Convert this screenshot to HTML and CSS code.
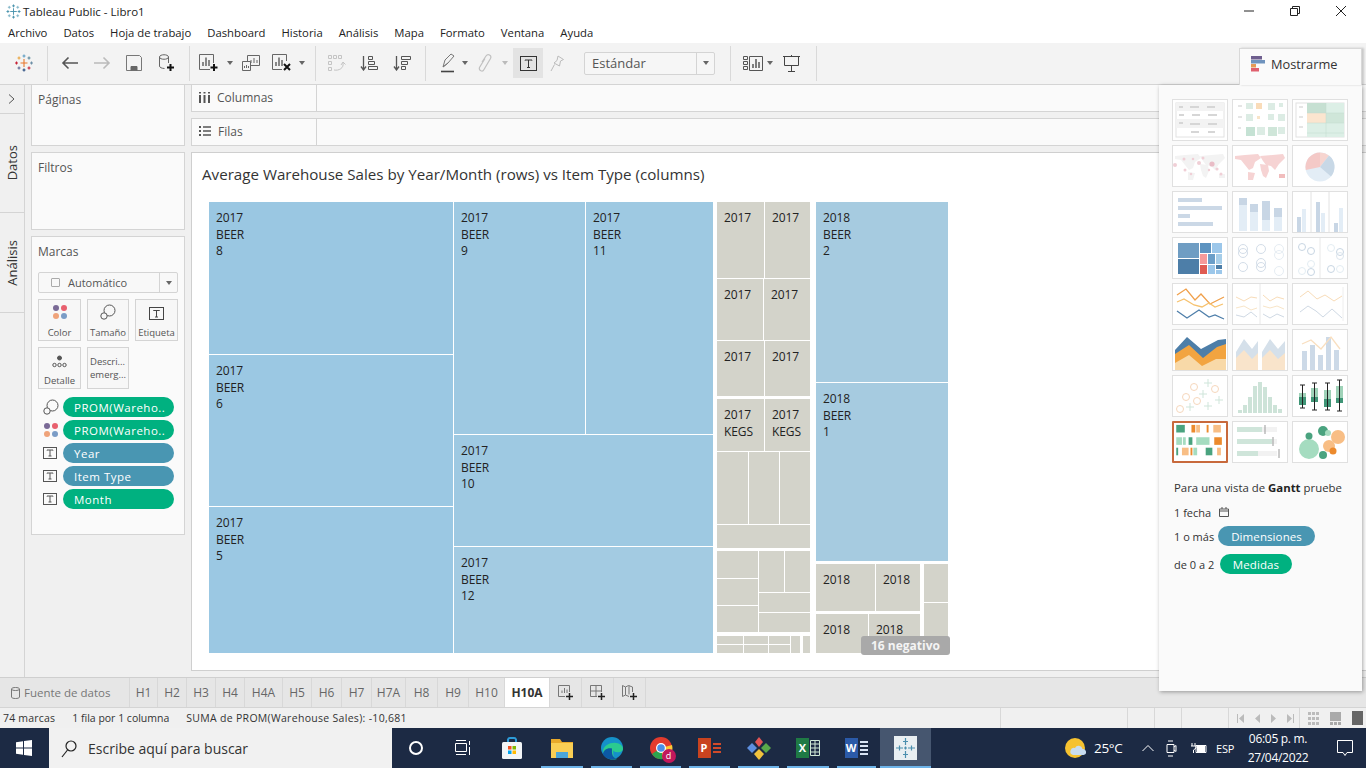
FILE: index.html
```html
<!DOCTYPE html>
<html lang="es">
<head>
<meta charset="utf-8">
<title>Tableau Public - Libro1</title>
<link rel="stylesheet" href="styles.css">
</head>
<body>
<header class="titlebar">
  <svg class="app-ico" viewBox="0 0 16 16"><g stroke="#4a93ad" stroke-width="1" fill="none"><path d="M8 4.500v7M4.500 8h7"/><path d="M8 .5v3M6.500 2h3M8 12.500v3M6.500 14h3M.5 8h3M2 6.500v3M12.500 8h3M14 6.500v3"/><path d="M3.500 2v3M2 3.500h3M12.500 2v3M11 3.500h3M3.500 11v3M2 12.500h3M12.500 11v3M11 12.500h3" stroke="#7fb4c8"/></g></svg>
  <span class="app-title">Tableau Public - Libro1</span>
  <div class="winctl">
    <div class="wbtn"><svg width="12" height="12" viewBox="0 0 12 12"><path d="M1 6h10" stroke="#222"/></svg></div>
    <div class="wbtn"><svg width="12" height="12" viewBox="0 0 12 12"><path d="M1.500 3.500h7v7h-7zM3.500 3.500v-2h7v7h-2" fill="none" stroke="#222"/></svg></div>
    <div class="wbtn"><svg width="12" height="12" viewBox="0 0 12 12"><path d="M1 1l10 10M11 1L1 11" stroke="#222"/></svg></div>
  </div>
</header>
<nav class="menubar">
  <span>Archivo</span><span>Datos</span><span>Hoja de trabajo</span><span>Dashboard</span><span>Historia</span><span>Análisis</span><span>Mapa</span><span>Formato</span><span>Ventana</span><span>Ayuda</span>
</nav>
<div class="toolbar">
  <div class="b w47"><svg width="18" height="18" viewBox="0 0 18 18" fill="none" stroke-width="1.100"><path d="M9 5v8M5.500 9h7" stroke="#e8762b"/><path d="M4 2.500v3M2.500 4h3" stroke="#e8a33d"/><path d="M14 2.500v3M12.500 4h3" stroke="#59879b"/><path d="M9 .5v3M7.500 2h3" stroke="#5b9bc0"/><path d="M4 12.500v3M2.500 14h3" stroke="#5b6591"/><path d="M14 12.500v3M12.500 14h3" stroke="#c72035"/><path d="M9 14.500v3M7.500 16h3" stroke="#1f447a"/><path d="M1.500 7.500v3M0 9h3" stroke="#c72035"/><path d="M16.500 7.500v3M15 9h3" stroke="#6c8ea6"/></svg></div>
  <i class="sep"></i><i class="s6"></i>
  <div class="b w32"><svg width="18" height="14" viewBox="0 0 18 14" fill="none" stroke="#555" stroke-width="1.600"><path d="M17 7H2M7.500 1.500L2 7l5.500 5.500"/></svg></div>
  <div class="b w32"><svg width="18" height="14" viewBox="0 0 18 14" fill="none" stroke="#bbb" stroke-width="1.600"><path d="M1 7h15M10.500 1.500L16 7l-5.500 5.500"/></svg></div>
  <div class="b w32"><svg width="16" height="16" viewBox="0 0 16 16" fill="none" stroke="#777"><path d="M.5.500h13l2 2v13H.5z"/><path d="M5 15.500v-4h6v4" fill="#666" stroke="#666"/></svg></div>
  <div class="b w31"><svg width="18" height="18" viewBox="0 0 18 18" fill="none" stroke="#666"><path d="M2.500 3c0-3 9-3 9 0v6M2.500 3v9c0 1.500 2 2.300 5 2.500M2.500 3c0 3 9 3 9 0"/><path d="M13.500 10v7M10 13.500h7" stroke="#111" stroke-width="2"/></svg></div>
  <i class="s8"></i><i class="sep"></i><i class="s3"></i>
  <div class="b w32"><svg width="20" height="18" viewBox="0 0 20 18" fill="none" stroke="#666"><path d="M11 15.500H.5V.5h14V9"/><path d="M4 12V8M7 12V3.500M10 12V6" stroke-width="1.500"/><path d="M15 10v7M11.500 13.500h7" stroke="#111" stroke-width="2"/></svg></div>
  <div class="caret w10"></div>
  <div class="b w32"><svg width="18" height="16" viewBox="0 0 18 16" fill="none" stroke="#666"><path d="M5.500 6.500V.5h12v10H9"/><path d="M.5 6.500h8v9h-8z" fill="#f3f3f3"/><path d="M9 8V5M12 8V3M15 8V5M2.500 13v-2M4.500 13v-3M6.500 13v-2"/></svg></div>
  <div class="b w30"><svg width="20" height="18" viewBox="0 0 20 18" fill="none" stroke="#666"><path d="M10 15.500H.5V.5h14V7"/><path d="M4 12V8M7 12V3.500M10 12V6" stroke-width="1.500"/><path d="M12 10l6 6M18 10l-6 6" stroke="#111" stroke-width="2"/></svg></div>
  <div class="caret w10"></div>
  <i class="s8"></i><i class="sep"></i><i class="s5"></i>
  <div class="b w32"><svg width="18" height="17" viewBox="0 0 18 17" fill="none" stroke="#c4c4c4"><path d="M.5.500h3v3h-3zM5.500.500h3v3h-3zM10.500.500h3v3h-3zM.5 6.500h3v3h-3zM.5 12.500h3v3h-3z"/><path d="M6 15c5 1 10-2 9-7M13 10l2-3 2.500 2.500" /></svg></div>
  <div class="b w32"><svg width="18" height="16" viewBox="0 0 18 16" fill="none" stroke="#555"><path d="M3.500 1v13M1 11.500L3.500 15 6 11.500" stroke-width="1.300"/><path d="M8.500 1.500h4v3h-4zM8.500 6.500h6v3h-6zM8.500 11.500h9v3h-9z"/></svg></div>
  <i class="s1"></i>
  <div class="b w32"><svg width="18" height="16" viewBox="0 0 18 16" fill="none" stroke="#555"><path d="M3.500 1v13M1 11.500L3.500 15 6 11.500" stroke-width="1.300"/><path d="M8.500 1.500h9v3h-9zM8.500 6.500h6v3h-6zM8.500 11.500h4v3h-4z"/></svg></div>
  <i class="s7"></i><i class="sep"></i><i class="s10"></i>
  <div class="b w24"><svg width="14" height="20" viewBox="0 0 14 20" fill="none" stroke="#777"><path d="M2 14L4 7l6-6 3 2-6 7zM2 14l5-4"/><path d="M0 18.500h13" stroke="#444" stroke-width="1.600"/></svg></div>
  <div class="caret w10"></div>
  <div class="b w30"><svg width="15" height="20" viewBox="0 0 15 20" fill="none" stroke="#c0c0c0" stroke-width="1.200"><path d="M4 9l4-6c2-3 6-.5 4.500 2.500L6 16.500c-1.500 3-5.500 1-4.500-2L7 5.500M5 18l2-3"/></svg></div>
  <div class="caret w10 off"></div>
  <i class="s3"></i>
  <div class="b w30 on"><svg width="17" height="15" viewBox="0 0 17 15" fill="none" stroke="#333"><rect x=".5" y=".5" width="16" height="14"/><path d="M5 4.500V4h7v.5M8.500 4v7.500M7 11.500h3"/></svg></div>
  <div class="b w28"><svg width="14" height="17" viewBox="0 0 14 17" fill="none" stroke="#bbb"><path d="M8 1l5.500 3.500-3 1.500-1 5-5.500-3 3-2.500zM4.500 9.500L1 16"/></svg></div>
  <i class="s13"></i>
  <div class="select"><span>Estándar</span><div class="caret sel-c"></div></div>
  <i class="s15"></i><i class="sep"></i><i class="s10"></i>
  <div class="b w24"><svg width="20" height="15" viewBox="0 0 20 15" fill="none" stroke="#555"><path d="M.5.500h4v3h-4zM.5 5.500h4v3h-4zM.5 10.500h4v3h-4zM6.500.500h13v14h-13z"/><path d="M10 12V8M13 12V3M16 12V6" stroke-width="1.500"/></svg></div>
  <div class="caret w10"></div>
  <div class="b w34"><svg width="18" height="17" viewBox="0 0 18 17" fill="none" stroke="#444"><path d="M0 1.500h17M1.500 1.500v9h14v-9M8.500 10.500v6M5 16.500h7M8.500 0v1"/></svg></div>
  <i class="s7"></i><i class="sep"></i>
</div>

<main class="main">
  <aside class="rail">
    <div class="rail-top"><svg width="7" height="10" viewBox="0 0 7 10" fill="none" stroke="#555"><path d="M1 .5L6 5 1 9.500"/></svg></div>
    <div class="rail-tab tall"><span>Datos</span></div>
    <div class="rail-tab"><span>Análisis</span></div>
  </aside>
  <section class="leftcol">
    <div class="card pages">Páginas</div>
    <div class="card filters">Filtros</div>
    <div class="card marks">
      <div class="marks-title">Marcas</div>
      <div class="marktype">
        <span class="mt-sq"></span><span class="mt-label">Automático</span><div class="caret mt-c"></div>
      </div>
      <div class="markgrid">
        <div class="mbtn"><svg class="mico" width="16" height="16" viewBox="0 0 16 16"><circle cx="4" cy="4" r="3" fill="#7a6a96"/><circle cx="12" cy="4" r="3" fill="#e8606e"/><circle cx="4" cy="12" r="3" fill="#efa37a"/><circle cx="12" cy="12" r="3" fill="#7a9cc6"/></svg><span>Color</span></div>
        <div class="mbtn"><svg class="mico" width="16" height="16" viewBox="0 0 16 16" fill="none" stroke="#555"><circle cx="9.500" cy="6.500" r="5.500"/><circle cx="4" cy="12" r="3.200" fill="#f7f7f7"/></svg><span>Tamaño</span></div>
        <div class="mbtn"><svg class="mico" width="15" height="13" viewBox="0 0 15 13" fill="none" stroke="#444"><rect x=".5" y=".5" width="14" height="12"/><path d="M4.500 4V3.500h6V4M7.500 3.500V10M6 10h3"/></svg><span>Etiqueta</span></div>
        <div class="mbtn"><svg class="mico" width="15" height="13" viewBox="0 0 15 13" fill="none" stroke="#555"><circle cx="7.500" cy="3" r="2" fill="#555"/><circle cx="2.500" cy="10" r="1.700"/><circle cx="7.500" cy="10" r="1.700"/><circle cx="12.500" cy="10" r="1.700"/></svg><span>Detalle</span></div>
        <div class="mbtn txt"><span>Descri...<br>emerg...</span></div>
      </div>
      <div class="pills">
        <div class="prow"><svg width="16" height="16" viewBox="0 0 16 16" fill="none" stroke="#555"><circle cx="9.500" cy="6.500" r="5.500"/><circle cx="4" cy="12" r="3.200" fill="#fafafa"/></svg><div class="pill green">PROM(Wareho..</div></div>
        <div class="prow"><svg width="16" height="16" viewBox="0 0 16 16"><circle cx="4" cy="4" r="3" fill="#7a6a96"/><circle cx="12" cy="4" r="3" fill="#e8606e"/><circle cx="4" cy="12" r="3" fill="#efa37a"/><circle cx="12" cy="12" r="3" fill="#7a9cc6"/></svg><div class="pill green">PROM(Wareho..</div></div>
        <div class="prow"><svg width="14" height="12" viewBox="0 0 14 12" fill="none" stroke="#555"><rect x=".5" y=".5" width="13" height="11"/><path d="M4 3.500V3h6v.5M7 3v6M5.500 9h3"/></svg><div class="pill blue">Year</div></div>
        <div class="prow"><svg width="14" height="12" viewBox="0 0 14 12" fill="none" stroke="#555"><rect x=".5" y=".5" width="13" height="11"/><path d="M4 3.500V3h6v.5M7 3v6M5.500 9h3"/></svg><div class="pill blue">Item Type</div></div>
        <div class="prow"><svg width="14" height="12" viewBox="0 0 14 12" fill="none" stroke="#555"><rect x=".5" y=".5" width="13" height="11"/><path d="M4 3.500V3h6v.5M7 3v6M5.500 9h3"/></svg><div class="pill green">Month</div></div>
      </div>
    </div>
  </section>
  <section class="center">
    <div class="shelf first">
      <div class="shelf-label"><svg width="11" height="11" viewBox="0 0 11 11" fill="#555"><path d="M0 3h2v8H0zM4.500 3h2v8h-2zM9 3h2v8H9zM0 0h2v1.500H0zM4.500 0h2v1.500h-2zM9 0h2v1.500H9z"/></svg>Columnas</div>
    </div>
    <div class="shelf second">
      <div class="shelf-label"><svg width="12" height="10" viewBox="0 0 12 10" fill="#555"><path d="M0 0h2v2H0zM4 .300h8v1.400H4zM0 4h2v2H0zM4 4.300h8v1.400H4zM0 8h2v2H0zM4 8.300h8v1.400H4z"/></svg>Filas</div>
    </div>
    <div class="canvas">
      <h1 class="viz-title">Average Warehouse Sales by Year/Month (rows) vs Item Type (columns)</h1>
      <div class="tm">
        <div class="r" style="width:504px">
          <div class="k" style="width:244px">
            <div class="c bl1" style="height:152px">2017<br>BEER<br>8</div>
            <div class="c bl2" style="height:151px">2017<br>BEER<br>6</div>
            <div class="c bl2" style="height:146px">2017<br>BEER<br>5</div>
          </div>
          <div class="k" style="width:259px">
            <div class="r" style="height:232px">
              <div class="c bl3" style="width:131px">2017<br>BEER<br>9</div>
              <div class="c bl3" style="width:127px">2017<br>BEER<br>11</div>
            </div>
            <div class="c bl3" style="height:111px">2017<br>BEER<br>10</div>
            <div class="c bl4" style="height:106px">2017<br>BEER<br>12</div>
          </div>
        </div>
        <div class="k kegs" style="width:93px">
          <div class="r" style="height:76px"><div class="c g" style="width:47px">2017</div><div class="c g" style="width:45px">2017</div></div>
          <div class="r" style="height:61px"><div class="c g" style="width:46px">2017</div><div class="c g" style="width:46px">2017</div></div>
          <div class="r" style="height:55px"><div class="c g" style="width:47px">2017</div><div class="c g" style="width:45px">2017</div></div>
          <div class="r gap2" style="height:52px"><div class="c g" style="width:47px">2017<br>KEGS</div><div class="c g" style="width:45px">2017<br>KEGS</div></div>
          <div class="r" style="height:72px"><div class="c g" style="width:31px"></div><div class="c g" style="width:30px"></div><div class="c g" style="width:30px"></div></div>
          <div class="c g" style="height:23px"></div>
          <div class="r gap2" style="height:81px">
            <div class="k" style="width:41px"><div class="c g" style="height:27px"></div><div class="c g" style="height:26px"></div><div class="c g" style="height:26px"></div></div>
            <div class="k" style="width:51px">
              <div class="r" style="height:41px"><div class="c g" style="width:25px"></div><div class="c g" style="width:25px"></div></div>
              <div class="c g" style="height:19px"></div><div class="c g" style="height:19px"></div>
            </div>
          </div>
          <div class="r gap3" style="height:17px">
            <div class="k" style="width:26px"><div class="c g" style="height:8px"></div><div class="c g" style="height:8px"></div></div>
            <div class="k" style="width:24px"><div class="c g" style="height:8px"></div><div class="c g" style="height:8px"></div></div>
            <div class="k" style="width:21px"><div class="c g" style="height:8px"></div><div class="c g" style="height:8px"></div></div>
            <div class="c g" style="width:9px"></div>
            <div class="c g gapl" style="width:7px"></div>
          </div>
        </div>
        <div class="k y18" style="width:132px">
          <div class="c bl5" style="height:180px">2018<br>BEER<br>2</div>
          <div class="c bl5" style="height:178px">2018<br>BEER<br>1</div>
          <div class="r gap2" style="height:89px">
            <div class="k" style="width:104px">
              <div class="r" style="height:47px"><div class="c g" style="width:59px">2018</div><div class="c g" style="width:44px">2018</div></div>
              <div class="r gap2" style="height:39px"><div class="c g" style="width:52px">2018</div><div class="c g" style="width:51px">2018</div></div>
            </div>
            <div class="k gapl2" style="width:24px"><div class="c g" style="height:38px"></div><div class="c g" style="height:50px"></div></div>
          </div>
        </div>
      </div>
      <div class="negbadge">16 negativo</div>
    </div>
  </section>
</main>

<aside class="showme">
  <div class="sm-tab"><svg width="15" height="16" viewBox="0 0 15 16"><rect width="11" height="3.500" fill="#6f5f8f"/><rect y="4" width="14" height="3.500" fill="#6f93bd"/><rect y="8" width="5" height="3.500" fill="#e69a55"/><rect y="12" width="8" height="3.500" fill="#e0606e"/></svg><span>Mostrarme</span></div>
  <div class="sm-body">
    <div class="sm-grid">
      <div class="th"><svg viewBox="0 0 54 40"><rect x="3" y="3" width="48" height="34" fill="#fff" stroke="#e2e2e2"/><path d="M3 3h48v8H3zM3 19h48v9H3z" fill="#f3f3f3"/><path d="M6 7h4M6 15h5M6 23h4M17 7h9M34 7h8M19 15h8M35 15h9M17 24h10M35 24h9M18 32h8M35 32h7" stroke="#d6d6d6" stroke-width="2"/></svg></div>
      <div class="th"><svg viewBox="0 0 54 40"><g fill="#dcece4"><rect x="13" y="3" width="7" height="6"/><rect x="35" y="3" width="7" height="7"/><rect x="46" y="3" width="4" height="4"/><rect x="13" y="14" width="7" height="7"/><rect x="35" y="14" width="6" height="6"/><rect x="45" y="14" width="7" height="7"/><rect x="24" y="16" width="3" height="3" fill="#f8e4c8"/><rect x="13" y="27" width="9" height="9" fill="#c5e2d4"/><rect x="24" y="27" width="8" height="8"/><rect x="35" y="27" width="9" height="9" fill="#cfe6d9"/><rect x="45" y="27" width="7" height="7"/></g><rect x="23" y="3" width="6" height="6" fill="#f9dcb9"/><path d="M5 6h4M5 17h4M5 28h3" stroke="#ddd" stroke-width="1.500"/></svg></div>
      <div class="th"><svg viewBox="0 0 54 40"><rect x="3" y="3" width="48" height="34" fill="#fff" stroke="#e2e2e2"/><g fill="#dcefe6"><rect x="14" y="3" width="19" height="10" fill="#c6e0d2"/><rect x="33" y="3" width="18" height="10"/><rect x="14" y="13" width="19" height="10" fill="#fbe5cf"/><rect x="33" y="13" width="18" height="10" fill="#cfe6d9"/><rect x="14" y="23" width="19" height="10"/><rect x="33" y="23" width="18" height="10"/><rect x="14" y="33" width="37" height="4"/></g><path d="M14 13h37M14 23h37M14 33h37M33 3v34" stroke="#c3d8cc" stroke-width=".5"/><path d="M6 7h4M6 17h4M6 27h4" stroke="#ddd" stroke-width="1.500"/></svg></div>
      <div class="th"><svg viewBox="0 0 54 40"><g fill="#f3f3f3"><path d="M2 10l10-1 13-1 3 4-6 4-2 6-4 2-4-5-4-5-6-1z"/><path d="M15 26l7 1-2 7-5 0z"/><path d="M27 10l23-2 2 4-6 6-4 6-4-4-5-1-3-4z"/><path d="M27 18l8 1 1 6-3 7-3-2-2-6z"/><path d="M46 28h6v4h-6z"/></g><g fill="#f0cfd6"><circle cx="2" cy="19" r="2"/><circle cx="11" cy="13" r="1.500"/><circle cx="20" cy="13" r="1.300"/><circle cx="26" cy="17" r="2"/><circle cx="39" cy="18" r="2.600" fill="#e9bcc6"/><circle cx="44" cy="23" r="1.600"/><circle cx="12" cy="24" r="1.500"/><circle cx="18" cy="28" r="1.300"/><circle cx="48" cy="28" r="1.500"/><circle cx="30" cy="12" r="1.500"/><circle cx="36" cy="24" r="1.200"/></g></svg></div>
      <div class="th"><svg viewBox="0 0 54 40"><g fill="#f6d3d3"><path d="M2 10l10-1 13-1 3 4-6 4-2 6-4 2-4-5-4-5-6-1z"/><path d="M15 26l7 1-2 7-5 0z"/><path d="M27 10l23-2 2 4-6 6-4 6-4-4-5-1-3-4z"/><path d="M27 18l8 1 1 6-3 7-3-2-2-6z"/></g><path d="M46 28h6v4h-6z" fill="#f1bdbd"/></svg></div>
      <div class="th"><svg viewBox="0 0 54 40"><circle cx="27" cy="21" r="14.500" fill="#e3edf6"/><path d="M27 21V6.500A14.500 14.500 0 0 1 36 9.600z" fill="#f7d5d0"/><path d="M27 21l9-11.400A14.500 14.500 0 0 1 38 30.400z" fill="#c8d8e6"/><path d="M27 21V6.500A14.500 14.500 0 0 0 12.800 24z" fill="#f4c9c7"/></svg></div>
      <div class="th"><svg viewBox="0 0 54 40" fill="#cbd8e6"><rect x="5" y="6" width="24" height="4"/><rect x="5" y="14" width="44" height="4"/><rect x="5" y="22" width="12" height="4"/><rect x="5" y="30" width="35" height="4"/></svg></div>
      <div class="th"><svg viewBox="0 0 54 40"><g fill="#e3edf6"><rect x="6" y="6" width="8" height="33"/><rect x="17" y="12" width="8" height="27"/><rect x="29" y="9" width="8" height="30"/><rect x="41" y="16" width="8" height="23"/></g><g fill="#c8d6e5"><rect x="6" y="6" width="8" height="7"/><rect x="17" y="12" width="8" height="8"/><rect x="29" y="9" width="8" height="19"/><rect x="41" y="16" width="8" height="9"/></g></svg></div>
      <div class="th"><svg viewBox="0 0 54 40"><path d="M18 0v40M36 0v40" stroke="#e2e2e2"/><g fill="#c8d6e5"><rect x="4" y="25" width="4" height="15"/><rect x="23" y="10" width="4" height="30"/><rect x="41" y="31" width="4" height="9"/></g><g fill="#e3edf6"><rect x="9" y="17" width="4" height="23"/><rect x="28" y="21" width="4" height="19"/><rect x="46" y="16" width="4" height="24"/></g></svg></div>
      <div class="th"><svg viewBox="0 0 54 40"><rect x="5" y="5" width="21" height="15" fill="#6f9dc3"/><rect x="5" y="21" width="21" height="15" fill="#4d7ea8"/><rect x="27" y="5" width="11" height="10" fill="#5d93c0"/><rect x="39" y="5" width="10" height="10" fill="#9cc7ea"/><rect x="27" y="16" width="7" height="10" fill="#f59a9a"/><rect x="35" y="16" width="7" height="10" fill="#6b9ec8"/><rect x="43" y="16" width="6" height="10" fill="#a6cde8"/><rect x="27" y="27" width="7" height="9" fill="#df5b52"/><rect x="35" y="27" width="7" height="9" fill="#9cc7ea"/><rect x="43" y="27" width="6" height="4" fill="#4d7ea8"/><rect x="43" y="32" width="6" height="4" fill="#9cc7ea"/></svg></div>
      <div class="th"><svg viewBox="0 0 54 40" fill="none" stroke="#d3dde8"><circle cx="10" cy="11" r="4.500"/><circle cx="10" cy="15" r="4.500"/><circle cx="10" cy="29" r="4.500"/><circle cx="28" cy="11" r="4.500"/><circle cx="28" cy="25" r="4.500"/><circle cx="28" cy="29" r="4.500"/><circle cx="46" cy="11" r="4.500" stroke="#e6edf3"/><circle cx="46" cy="17" r="4.500" stroke="#e6edf3"/><circle cx="46" cy="33" r="4.500" stroke="#e6edf3"/></svg></div>
      <div class="th"><svg viewBox="0 0 54 40" fill="none" stroke="#c8d6e3"><path d="M27 0v40" stroke="#e8e8e8"/><circle cx="9" cy="9" r="3.500"/><circle cx="18" cy="13" r="3.500"/><circle cx="18" cy="34" r="3.500"/><circle cx="9" cy="33" r="3.500" stroke="#e3edf3"/><circle cx="18" cy="26" r="3.500" stroke="#e3edf3"/><circle cx="38" cy="10" r="3.500" stroke="#e3edf3"/><circle cx="47" cy="14" r="3.500"/><circle cx="47" cy="18" r="3.500" stroke="#dde6ee"/><circle cx="38" cy="31" r="3.500"/><circle cx="47" cy="31" r="3.500" stroke="#e3edf3"/></svg></div>
      <div class="th"><svg viewBox="0 0 54 40" fill="none" stroke-width="1.300"><path d="M4 11l9-6 9 11 6-6 9 10 14-7" stroke="#f0a04b"/><path d="M4 18l7-3 10 6 8 2 7-4 6 4 8-3" stroke="#f6c26f"/><path d="M4 27l10 7 12-8 10 7 6-2 9 4" stroke="#4f7faa"/></svg></div>
      <div class="th"><svg viewBox="0 0 54 40" fill="none"><path d="M27 0v40" stroke="#e8e8e8"/><path d="M3 13l8 4 7-4 6 1M30 11l7 6 7-4 7 2" stroke="#f8dcb8"/><path d="M3 24l8-2 7 4 6-2M30 22l7 2 7-2 7 3" stroke="#f8e5c8"/><path d="M3 31l8 2 7-5 6 5M30 30l7 4 7-4 7 3" stroke="#cfd9e4"/></svg></div>
      <div class="th"><svg viewBox="0 0 54 40" fill="none"><path d="M50 3v34" stroke="#eee"/><path d="M7 13l8-6 9 8 8-4 9 6 8-5" stroke="#f8dcb8"/><path d="M7 28l8-6 8 5 7 6 9-8 10 9" stroke="#cfd9e4"/></svg></div>
      <div class="th"><svg viewBox="0 0 54 40"><path d="M2 20L14 7l14 12 17-9 8-1v31H2z" fill="#4d7ea8"/><path d="M2 24l14-9 14 13 14-11 9-3v26H2z" fill="#f2a440"/><path d="M2 33l14-8 13 11 14-7 10 0v11H2z" fill="#f8d9a8"/></svg></div>
      <div class="th"><svg viewBox="0 0 54 40"><path d="M3 22L11 9l8 10 6-8v29H3z" fill="#d5e0ea"/><path d="M3 28l8-8 8 9 6-6v17H3z" fill="#f9e4cb"/><path d="M29 22l8-13 8 10 7-8v29H29z" fill="#d5e0ea"/><path d="M29 28l8-8 8 9 7-6v17H29z" fill="#f9e4cb"/></svg></div>
      <div class="th"><svg viewBox="0 0 54 40"><g fill="#ccd9e7"><rect x="9" y="21" width="5" height="19"/><rect x="17" y="15" width="5" height="25"/><rect x="25" y="25" width="5" height="15"/><rect x="33" y="7" width="5" height="33"/><rect x="41" y="20" width="5" height="20"/></g><path d="M9 14l9-4 10 9 10-12 9 12" stroke="#f9dfc0" fill="none" stroke-width="1.300"/></svg></div>
      <div class="th"><svg viewBox="0 0 54 40" fill="none" stroke="#f6d7bc"><circle cx="21" cy="11" r="3.500"/><circle cx="42" cy="13" r="3.500"/><circle cx="13" cy="21" r="3.500"/><circle cx="24" cy="25" r="3.500"/><circle cx="7" cy="33" r="3.500"/><path d="M35 3v8M31 7h8M30 14v8M26 18h8M46 20v8M42 24h8M17 27v8M13 31h8M35 26v8M31 30h8" stroke="#cfe5da"/></svg></div>
      <div class="th"><svg viewBox="0 0 54 40" fill="#cde3d8"><rect x="5" y="34" width="4" height="3"/><rect x="10" y="29" width="4" height="8"/><rect x="15" y="21" width="4" height="16"/><rect x="20" y="10" width="4" height="27"/><rect x="25" y="6" width="4" height="31"/><rect x="30" y="11" width="4" height="26"/><rect x="35" y="21" width="4" height="16"/><rect x="40" y="29" width="4" height="8"/><rect x="45" y="33" width="4" height="4"/></svg></div>
      <div class="th"><svg viewBox="0 0 54 40"><g fill="#9fd2b8"><rect x="6" y="17" width="7" height="12"/><rect x="18" y="12" width="7" height="14"/><rect x="31" y="14" width="7" height="12"/><rect x="43" y="10" width="7" height="12"/></g><g fill="#3f9576"><rect x="6" y="21" width="7" height="8"/><rect x="18" y="21" width="7" height="5"/><rect x="31" y="23" width="7" height="8"/><rect x="43" y="22" width="7" height="5"/></g><path d="M9.500 9v23M7 9h5M7 32h5M21.500 7v27M19 7h5M19 34h5M34.500 7v27M32 7h5M32 34h5M46.500 4v31M44 4h5M44 35h5" stroke="#222" fill="none"/></svg></div>
      <div class="th active"><svg viewBox="0 0 54 40"><g fill="#4aa37f"><rect x="2" y="2" width="9" height="8"/><rect x="15" y="15" width="4" height="8"/><rect x="33" y="26" width="7" height="8"/><rect x="2" y="26" width="2" height="8"/></g><g fill="#a5dcc0"><rect x="2" y="15" width="6" height="8"/><rect x="9" y="15" width="3" height="8"/><rect x="23" y="15" width="14" height="8"/><rect x="20" y="26" width="4" height="8"/></g><g fill="#ec8a2d"><rect x="18" y="2" width="4" height="8"/><rect x="34" y="2" width="2" height="8"/><rect x="42" y="15" width="8" height="8"/><rect x="17" y="26" width="2" height="8"/></g><g fill="#f8be85"><rect x="23" y="2" width="4" height="8"/><rect x="41" y="2" width="8" height="8"/><rect x="8" y="26" width="7" height="8"/><rect x="45" y="26" width="4" height="8"/></g></svg></div>
      <div class="th"><svg viewBox="0 0 54 40"><rect x="4" y="5" width="40" height="5" fill="#f2f2f2"/><rect x="4" y="17" width="40" height="5" fill="#f2f2f2"/><rect x="4" y="29" width="40" height="5" fill="#f2f2f2"/><rect x="4" y="5" width="25" height="5" fill="#cfe5da"/><rect x="4" y="17" width="35" height="5" fill="#cfe5da"/><rect x="4" y="29" width="21" height="5" fill="#cfe5da"/><path d="M32 3v9M40 15v9M46 27v9" stroke="#999"/></svg></div>
      <div class="th"><svg viewBox="0 0 54 40"><circle cx="16" cy="27" r="10" fill="#a5dcc0"/><circle cx="30" cy="9" r="5" fill="#4aa37f"/><circle cx="16" cy="14" r="3.500" fill="#4aa37f"/><circle cx="36" cy="24" r="6" fill="#f8be85"/><circle cx="45" cy="15" r="7" fill="#f8be85"/><circle cx="35" cy="11" r="3" fill="#a5dcc0"/><circle cx="30" cy="33" r="4" fill="#4aa37f"/><circle cx="40" cy="29" r="3.500" fill="#ec8a2d"/></svg></div>
    </div>
    <div class="hint">
      <p class="h-first">Para una vista de <b>Gantt</b> pruebe</p>
      <p class="h-date">1 fecha <svg width="10" height="10" viewBox="0 0 10 10" fill="none" stroke="#555"><path d="M.5 2h9v7.500h-9zM.5 4h9M3 0v2M7 0v2"/></svg></p>
      <p class="h-dim">1 o más <span class="pill blue sm dim">Dimensiones</span></p>
      <p class="h-med">de 0 a 2 <span class="pill green sm med">Medidas</span></p>
    </div>
  </div>
</aside>

<div class="tabs">
  <div class="tab ds"><svg width="9" height="12" viewBox="0 0 9 12" fill="none" stroke="#777"><path d="M.5 2c0-2 8-2 8 0v8c0 2-8 2-8 0zM.5 2c0 2 8 2 8 0"/></svg>Fuente de datos</div>
  <div class="tab t28">H1</div><div class="tab t29">H2</div><div class="tab t29">H3</div><div class="tab t29">H4</div><div class="tab t39">H4A</div><div class="tab t29">H5</div><div class="tab t30">H6</div><div class="tab t30">H7</div><div class="tab t34">H7A</div><div class="tab t32">H8</div><div class="tab t31">H9</div><div class="tab t36">H10</div>
  <div class="tab active-tab">H10A</div>
  <div class="tab t32"><svg width="17" height="17" viewBox="0 0 17 17" fill="none" stroke="#777"><path d="M8 12.500H1.500V1.500h11V8M5 9V6.500M7.500 9V4M10 9V5.500"/><path d="M12.500 9v7M9 12.500h7" stroke="#222" stroke-width="1.500"/></svg></div>
  <div class="tab t32"><svg width="17" height="17" viewBox="0 0 17 17" fill="none" stroke="#777"><path d="M8 12.500H1.500V1.500h11V8M1.500 7h11M7 1.500v11"/><path d="M12.500 9v7M9 12.500h7" stroke="#222" stroke-width="1.500"/></svg></div>
  <div class="tab t32"><svg width="17" height="17" viewBox="0 0 17 17" fill="none" stroke="#777"><path d="M8 12.500L4.500 11 1.500 12.500v-11l3 1.500 3-1.500 4 1.500v5M4.500 3v8M8 1.500v9"/><path d="M12.500 9v7M9 12.500h7" stroke="#222" stroke-width="1.500"/></svg></div>
</div>
<footer class="status">
  <span class="st74">74 marcas</span><span class="st1">1 fila por 1 columna</span><span class="st2">SUMA de PROM(Warehouse Sales): -10,681</span>
  <div class="st-cells">
    <i class="c127"></i><i class="c27"></i><i class="c27"></i><i class="c47"></i>
    <div class="nav"><svg width="62" height="9" viewBox="0 0 62 9" fill="#bbb"><path d="M0 0h1v9H0zM7 0v9L2 4.500zM23 0v9l-5-4.500zM34 0v9l5-4.500zM50 0v9l5-4.500zM56 0h1v9h-1z"/></svg></div>
    <div class="views">
      <svg width="11" height="13" viewBox="0 0 11 13" fill="#bbb"><path d="M0 0h3v3H0zM4 0h3v3H4zM8 0h3v3H8zM0 5h3v3H0zM4 5h3v3H4zM8 5h3v3H8zM0 10h3v3H0zM4 10h3v3H4zM8 10h3v3H8z"/></svg>
      <svg width="11" height="13" viewBox="0 0 11 13" fill="#aaa"><path d="M0 0h11v9H0zM0 10h3v3H0zM4 10h3v3H4zM8 10h3v3H8z"/></svg>
      <svg width="11" height="14" viewBox="0 0 11 14" fill="#666"><path d="M0 0h11v14H0z"/></svg>
    </div>
  </div>
</footer>
<div class="taskbar">
  <div class="tk-start"><svg width="16" height="16" viewBox="0 0 16 16" fill="#fff"><path d="M0 2.200l7-1v6.300H0zM8 1l8-1v7.500H8zM0 8.500h7v6.300l-7-1zM8 8.500h8V16l-8-1z"/></svg></div>
  <div class="tk-search"><svg width="16" height="18" viewBox="0 0 16 18" fill="none" stroke="#222" stroke-width="1.200"><circle cx="10" cy="6" r="5"/><path d="M6.500 10L1 17"/></svg><span>Escribe aquí para buscar</span></div>
  <div class="tk-apps">
    <div class="tk-a w48"><svg width="16" height="16" viewBox="0 0 16 16" fill="none" stroke="#fff" stroke-width="2"><circle cx="8" cy="8" r="6"/></svg></div>
    <div class="tk-a w47"><svg width="17" height="16" viewBox="0 0 17 16" fill="none" stroke="#fff"><path d="M.5 3.500h11v8H.5zM1 .5h10M1 14.500h10M14.500 1v4M14.500 7v8"/></svg></div>
    <div class="tk-a w50"><svg width="22" height="24" viewBox="0 0 22 24"><path d="M7 6V3.500A2 2 0 0 1 9 2h4a2 2 0 0 1 2 1.500V6" fill="none" stroke="#2d9bd8" stroke-width="2"/><rect x="1" y="6" width="20" height="17" rx="1.500" fill="#f2f5f7"/><rect x="7" y="10" width="3.500" height="3.500" fill="#f25022"/><rect x="11.500" y="10" width="3.500" height="3.500" fill="#7fba00"/><rect x="7" y="14.500" width="3.500" height="3.500" fill="#00a4ef"/><rect x="11.500" y="14.500" width="3.500" height="3.500" fill="#ffb900"/></svg></div>
    <div class="tk-a w50 open"><svg width="24" height="22" viewBox="0 0 24 22"><path d="M1 2h9l2 3h11v3H1z" fill="#e8a92a"/><path d="M1 6h22v15H1z" fill="#f9ce54"/><path d="M6 15h12v6H6z" fill="#4ba6d9"/></svg></div>
    <div class="tk-a w49 open"><svg width="24" height="24" viewBox="0 0 24 24"><circle cx="12" cy="12" r="11" fill="#1591c9"/><path d="M3 15C4 7 17 4 22 10c2 3 1 5-2 6-5 1-7-1-8-3 3 3-1 8 5 10-7 2-13-1-14-8z" fill="#2bcb8f"/><path d="M12 12.500c-5-1-9 2-9 6 2 4 8 6 14 4.500-6-2-5-7-5-10.500z" fill="#0c59a4"/></svg></div>
    <div class="tk-a w49 open"><div class="chrome"><svg width="24" height="24" viewBox="0 0 24 24"><circle cx="12" cy="12" r="11" fill="#e33b2e"/><path d="M12 12L3 18a11 11 0 0 0 11 5z" fill="#2da44e"/><path d="M12 12l11-3a11 11 0 0 1-9 14z" fill="#fcc934"/><circle cx="12" cy="12" r="5" fill="#fff"/><circle cx="12" cy="12" r="3.800" fill="#4a8fe8"/></svg><span class="ch-d">d</span></div></div>
    <div class="tk-a w49 open"><div class="off-ico ppt"><span class="off-l">P</span><svg width="10" height="18" viewBox="0 0 10 18" fill="none" stroke="#d04a2a" stroke-width="2"><path d="M1 5h8M1 9h8M1 13h8"/></svg></div></div>
    <div class="tk-a w49 open"><svg width="26" height="28" viewBox="0 0 26 28"><path d="M13 3l4 5-4 5-4-5z" fill="#e25555"/><path d="M6 9l5 5-5 5-5-5z" fill="#5d8fe0"/><path d="M20 9l5 5-5 5-5-5z" fill="#59a84a"/><path d="M13 15l5 5-5 6-5-6z" fill="#f0c23d"/></svg></div>
    <div class="tk-a w50 open"><div class="off-ico xl"><span class="off-l">X</span><svg width="10" height="18" viewBox="0 0 10 18" fill="none" stroke="#cfe8d7"><path d="M.5 1.500h9v15h-9zM.5 5h9M.5 9h9M.5 13h9M5 1.500v15"/></svg></div></div>
    <div class="tk-a w47 open"><div class="off-ico wd"><span class="off-l">W</span><svg width="10" height="18" viewBox="0 0 10 18" fill="none" stroke="#d9e4f4" stroke-width="2"><path d="M1 3h8M1 7h8M1 11h8M1 15h8"/></svg></div></div>
    <div class="tk-a w51 open cur"><svg width="23" height="24" viewBox="0 0 23 24"><rect width="23" height="24" fill="#e9eff2"/><path d="M11.500 2v7M9 5.500h5M11.500 15v7M9 18.500h5M2 12h7M5.500 9.500v5M14 12h7M17.500 9.500v5M10 12h3M11.500 10.500v3" stroke="#4b8fae" stroke-width="1.200"/></svg></div>
  </div>
  <div class="tk-tray">
    <svg class="weather" width="22" height="24" viewBox="0 0 22 24"><circle cx="10" cy="12" r="10" fill="#f6c230"/><path d="M8 19a3.500 3.500 0 0 1 2-7 4 4 0 0 1 7.500 1 3 3 0 0 1 1 6z" fill="#c8dcef"/></svg>
    <span class="temp">25°C</span>
    <svg class="chev" width="12" height="8" viewBox="0 0 12 8" fill="none" stroke="#fff"><path d="M.5 7L6 1.500 11.500 7"/></svg>
    <svg class="meet" width="11" height="17" viewBox="0 0 11 17" fill="none" stroke="#fff"><path d="M2 1h5M2 16h5M1 4.500h7v8H1zM8 7l2-1.500v6L8 10"/></svg>
    <svg class="batt" width="17" height="12" viewBox="0 0 17 12" fill="none" stroke="#fff"><path d="M6 3.500h10v7H6z"/><path d="M7 4h8v6H7z" fill="#fff" stroke="none"/><path d="M2 1v3M5 1v3M1 4h5v2L3.500 8v3" /></svg>
    <span class="lang">ESP</span>
    <div class="clock"><span>06:05 p. m.</span><span>27/04/2022</span></div>
    <svg class="notif" width="16" height="16" viewBox="0 0 16 16" fill="none" stroke="#fff"><path d="M.5.500h15v12H10l-2 3-2-3H.5z"/></svg>
  </div>
</div>
</body>
</html>
```
FILE: styles.css
```css
* { box-sizing: border-box; }
html, body { margin: 0; padding: 0; }
body {
  width: 1366px; height: 768px; overflow: hidden; position: relative;
  display: flex; flex-direction: column;
  font-family: "Open Sans", "Liberation Sans", sans-serif;
  font-size: 12px; color: #333; background: #f0f0f0;
}
svg { display: block; flex: none; }

/* title + menu */
.titlebar { height: 22px; background: #fff; display: flex; align-items: center; padding-left: 6px; flex: none; }
.app-ico { width: 15px; height: 15px; }
.app-title { margin-left: 2px; font-size: 11.5px; color: #222; }
.winctl { margin-left: auto; display: flex; padding-right: 2px; }
.wbtn { width: 46px; height: 22px; display: flex; align-items: center; justify-content: center; }
.menubar { height: 21px; background: #fff; display: flex; align-items: center; gap: 16px; padding-left: 8px; font-size: 11.3px; color: #222; flex: none; }

/* toolbar */
.toolbar { height: 42px; background: #f3f3f3; border-bottom: 1px solid #d4d4d4; display: flex; align-items: center; flex: none; padding-bottom: 1px; }
.toolbar i { display: block; flex: none; }
.sep { width: 1px; height: 35px; background: #d9d9d9; }
.s1 { width: 1px; } .s3 { width: 3px; } .s5 { width: 5px; } .s6 { width: 6px; } .s7 { width: 7px; } .s8 { width: 8px; } .s10 { width: 10px; } .s13 { width: 13px; } .s15 { width: 15px; }
.b { height: 30px; display: flex; align-items: center; justify-content: center; flex: none; }
.w24 { width: 24px; } .w28 { width: 28px; } .w30 { width: 30px; } .w31 { width: 31px; } .w32 { width: 32px; } .w34 { width: 34px; } .w47 { width: 47px; }
.on { background: #e3e3e3; }
.caret { flex: none; height: 30px; position: relative; }
.w10 { width: 10px; }
.caret::after { content: ""; position: absolute; left: 50%; top: 50%; margin: -2px 0 0 -3px; border: 3px solid transparent; border-top: 4px solid #666; border-bottom: 0; }
.caret.off::after { border-top-color: #bbb; }
.select { width: 131px; height: 23px; border: 1px solid #d4d4d4; border-radius: 2px; background: #f6f6f6; display: flex; align-items: center; font-size: 13px; color: #555; padding-left: 7px; flex: none; }
.select span { flex: 1; }
.sel-c { width: 18px; height: 21px; border-left: 1px solid #d4d4d4; }

/* main area */
.main { flex: 1; display: flex; min-height: 0; background: #f0f0f0; }
.rail { width: 25px; border-right: 1px solid #d4d4d4; flex: none; display: flex; flex-direction: column; }
.rail-top { height: 29px; display: flex; align-items: center; justify-content: center; border-bottom: 1px solid #d4d4d4; padding-right: 1px; }
.rail-tab { height: 100px; border-bottom: 1px solid #d4d4d4; display: flex; align-items: center; justify-content: center; }
.rail-tab.tall { height: 99px; }
.rail-tab span { writing-mode: vertical-rl; transform: rotate(180deg); font-size: 13px; color: #333; }
.leftcol { width: 154px; margin: 0 6px; flex: none; display: flex; flex-direction: column; gap: 6px; }
.card { background: #fafafa; border: 1px solid #d4d4d4; padding: 6px 6px; color: #555; }
.pages { height: 61px; border-top: 0; }
.filters { height: 78px; }
.marks { height: 299px; padding: 6px 6px; }
.marks-title { height: 29px; }
.marktype { height: 21px; width: 140px; border: 1px solid #d4d4d4; border-radius: 2px; background: #f8f8f8; display: flex; align-items: center; font-size: 11px; color: #555; position: relative; padding-left: 12px; }
.mt-sq { width: 9px; height: 9px; border: 1px solid #aaa; border-radius: 1px; }
.mt-label { margin-left: 8px; flex: 1; }
.mt-c { width: 18px; height: 19px; border-left: 1px solid #d4d4d4; }
.markgrid { display: grid; grid-template-columns: 43px 42px 43px; gap: 6px 6px; margin-top: 6px; }
.mbtn { height: 42px; border: 1px solid #d4d4d4; background: #f7f7f7; display: flex; flex-direction: column; align-items: center; justify-content: flex-end; font-size: 9.5px; color: #555; padding-bottom: 1px; }
.mico { margin-bottom: 6px; }
.mbtn.txt { justify-content: center; padding-bottom: 0; line-height: 13.500px; }
.pills { margin-top: 8px; display: flex; flex-direction: column; gap: 3px; width: 131px; margin-left: 5px; }
.prow { height: 20px; display: flex; align-items: center; justify-content: space-between; }
.pill { height: 20px; border-radius: 10px; color: #fff; display: flex; align-items: center; font-size: 11.5px; letter-spacing: .5px; }
.prow .pill { width: 111px; padding-left: 11px; }
.green { background: #00b180; }
.blue { background: #4996b2; }

.center { flex: 1; min-width: 0; display: flex; flex-direction: column; }
.shelf { background: #fafafa; border: 1px solid #d4d4d4; border-right: 0; display: flex; align-items: stretch; color: #555; }
.shelf.first { height: 27px; border-top: 0; }
.shelf.second { height: 28px; margin-top: 6px; }
.shelf-label { width: 125px; border-right: 1px solid #d4d4d4; display: flex; align-items: center; gap: 7px; padding: 0 0 2px 7px; font-size: 12px; }
.canvas { margin-top: 6px; height: 519px; background: #fff; border: 1px solid #cfcfcf; border-right: 0; padding-left: 17px; position: relative; }
.viz-title { margin: 0 0 0 -7px; height: 49px; font-size: 15.15px; font-weight: 400; line-height: 42px; color: #333; white-space: nowrap; }

/* treemap */
.tm { display: flex; height: 451px; }
.r { display: flex; gap: 1px; flex: none; }
.k { display: flex; flex-direction: column; gap: 1px; flex: none; }
.c { flex: none; padding: 8px 0 0 7px; line-height: 16.500px; font-size: 12px; color: #222; overflow: hidden; letter-spacing: -.1px; }
.g { background: #d3d3ca; }
.bl1 { background: #9ac7e2; }
.bl2 { background: #9bc8e3; }
.bl3 { background: #9ec9e2; }
.bl4 { background: #a3cbe2; }
.bl5 { background: #a6cbe0; }
.kegs { margin-left: 4px; }
.y18 { margin-left: 6px; }
.gap2 { margin-top: 2px; }
.gap3 { margin-top: 3px; }
.gapl { margin-left: 2px; }
.gapl2 { margin-left: 3px; }
.negbadge { position: absolute; left: 669px; top: 483px; width: 89px; height: 19px; background: #a9a9a9; border-radius: 3px; color: #f4f4f4; font-weight: 700; font-size: 12px; text-align: center; line-height: 19px; }

/* show me */
.showme { position: absolute; left: 1159px; top: 48px; width: 203px; height: 643px; display: flex; flex-direction: column; align-items: flex-end; }
.sm-tab { width: 123px; height: 37px; background: #fafafa; border: 1px solid #d8d8d8; border-bottom: 0; display: flex; align-items: center; gap: 5px; padding: 0 0 7px 11px; font-size: 12.8px; color: #333; box-shadow: 2px 0 2px rgba(0,0,0,.18); position: relative; z-index: 1; }
.sm-body { width: 203px; flex: 1; background: #fafafa; box-shadow: 1px 1px 4px rgba(0,0,0,.35); padding: 14px 0 0 13px; }
.sm-grid { display: grid; grid-template-columns: repeat(3, 56px); grid-auto-rows: 42px; gap: 4px; }
.th { background: #fff; border: 1px solid #e0e0e0; overflow: hidden; }
.th svg { width: 54px; height: 40px; }
.th.active { border: 2px solid #c8693c; border-radius: 1px; }
.th.active svg { width: 52px; height: 38px; }
.hint { margin-top: 15px; padding-left: 2px; font-size: 11px; color: #333; }
.hint p { margin: 0; display: flex; align-items: center; gap: 3px; height: 20px; white-space: pre-wrap; }
.hint p.h-first { display: block; line-height: 20px; font-size: 11.4px; white-space: nowrap; }
.hint b { color: #222; }
.hint p.h-date { margin-top: 4px; gap: 5px; }
.hint p.h-dim { margin-top: 4px; }
.hint p.h-med { margin-top: 8px; }
.hint .sm { justify-content: center; letter-spacing: .1px; }
.dim { width: 97px; margin-left: -2px; }
.med { width: 72px; margin-left: 0; }

/* tabs */
.tabs { height: 30px; flex: none; background: #e6e6e6; border-top: 1px solid #cfcfcf; display: flex; color: #666; font-size: 12px; }
.tab { display: flex; align-items: center; justify-content: center; border-right: 1px solid #d8d8d8; flex: none; }
.ds { width: 130px; justify-content: flex-start; padding-left: 11px; gap: 4px; font-size: 11.500px; color: #777; }
.t28 { width: 28px; } .t29 { width: 29px; } .t30 { width: 30px; } .t31 { width: 31px; } .t32 { width: 32px; } .t34 { width: 34px; } .t36 { width: 36px; } .t39 { width: 38px; }
.active-tab { width: 45px; background: #fff; color: #333; font-weight: 700; }

/* status */
.status { height: 21px; flex: none; background: #f0f0f0; border-top: 1px solid #d4d4d4; display: flex; align-items: center; font-size: 10.500px; color: #333; padding-left: 3px; }
.st74 { letter-spacing: .2px; }
.st1 { margin-left: 17px; }
.st2 { margin-left: 17px; letter-spacing: .3px; }
.st-cells { margin-left: auto; display: flex; align-items: stretch; height: 100%; }
.st-cells i { display: block; border-left: 1px solid #d8d8d8; }
.c127 { width: 127px; } .c27 { width: 27px; } .c47 { width: 47px; }
.nav { width: 71px; border-left: 1px solid #d8d8d8; display: flex; align-items: center; padding-left: 8px; }
.views { width: 67px; border-left: 1px solid #d8d8d8; display: flex; align-items: center; gap: 11px; padding-left: 8px; }

/* taskbar */
.taskbar { height: 40px; flex: none; background: #1c2a44; display: flex; color: #fff; }
.tk-start { width: 49px; display: flex; align-items: center; justify-content: center; padding-right: 2px; }
.tk-search { width: 343px; background: #f1f1f1; display: flex; align-items: center; color: #333; font-size: 14px; padding: 1px 0 0 12px; gap: 11px; }
.tk-apps { display: flex; }
.tk-a { height: 40px; display: flex; align-items: center; justify-content: center; position: relative; flex: none; }
.w48 { width: 48px; } .w49 { width: 49px; } .w50 { width: 50px; } .w51 { width: 51px; }
.tk-a.w47 { width: 47px; }
.open::after { content: ""; position: absolute; left: 4px; right: 4px; bottom: 0; height: 2px; background: #6db3e8; }
.cur { background: #46566f; }
.cur::after { left: 0; right: 0; }
.chrome { position: relative; }
.ch-d { position: absolute; right: -3px; bottom: -3px; width: 14px; height: 14px; border-radius: 50%; background: #c2185b; color: #fff; font-size: 9px; line-height: 13px; text-align: center; }
.off-ico { display: flex; align-items: center; gap: 1px; }
.off-l { width: 13px; height: 20px; text-align: center; line-height: 20px; font-size: 11px; font-weight: 700; color: #fff; }
.ppt .off-l { background: #c9431f; }
.xl .off-l { background: #1f7a45; }
.wd .off-l { background: #2b5aa8; }
.tk-tray { margin-left: auto; display: flex; align-items: center; width: 303px; height: 40px; }
.weather { margin-left: 2px; }
.temp { margin-left: 7px; font-size: 13.500px; width: 32px; letter-spacing: -.3px; }
.chev { margin-left: 16px; }
.meet { margin-left: 12px; }
.batt { margin-left: 13px; }
.lang { margin-left: 9px; font-size: 11px; width: 22px; letter-spacing: -.2px; }
.clock { margin-left: 9px; width: 62px; display: flex; flex-direction: column; align-items: center; font-size: 12px; line-height: 19px; letter-spacing: -.3px; white-space: nowrap; }
.notif { margin-left: 28px; }
```
